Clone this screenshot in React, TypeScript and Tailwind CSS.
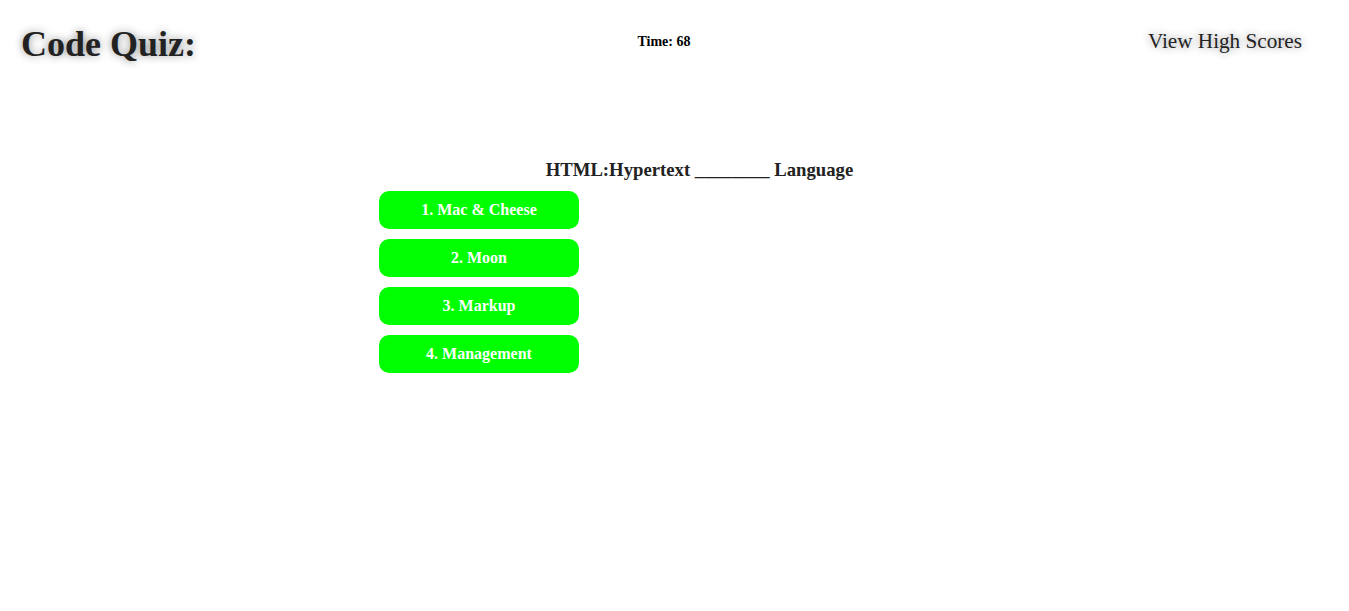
export default function App() {
  const choices = ['1. Mac & Cheese', '2. Moon', '3. Markup', '4. Management'];

  return (
    <div className="min-h-screen bg-white text-[#222] font-['Liberation_Serif','Times_New_Roman',serif]">
      {/* Header */}
      <header className="flex items-start justify-between pl-[21px] pr-[47px]">
        <h1 className="mt-[23px] text-[36px] font-bold leading-[normal] [text-shadow:0_0_8px_rgba(0,0,0,0.45)]">
          Code Quiz:
        </h1>
        <p className="mt-[34px] mr-[16px] text-[14px] font-bold leading-[normal] text-black">Time: 68</p>
        <a className="mt-[29px] text-[21.2px] leading-[normal] cursor-pointer [text-shadow:0_0_8px_rgba(0,0,0,0.45)]">
          View High Scores
        </a>
      </header>

      {/* Question */}
      <main className="mt-[94px] ml-[379px] w-[641px]">
        <h3 className="text-center text-[18.72px] font-bold leading-[21px] mb-[11px]">
          HTML:Hypertext ________ Language
        </h3>
        <div className="flex flex-col gap-[10px]">
          {choices.map((c) => (
            <button
              key={c}
              className="flex items-center justify-center w-[200px] h-[38px] rounded-[10px] bg-[#00ff00] text-white text-[16px] font-bold"
            >
              {c}
            </button>
          ))}
        </div>
      </main>
    </div>
  );
}
